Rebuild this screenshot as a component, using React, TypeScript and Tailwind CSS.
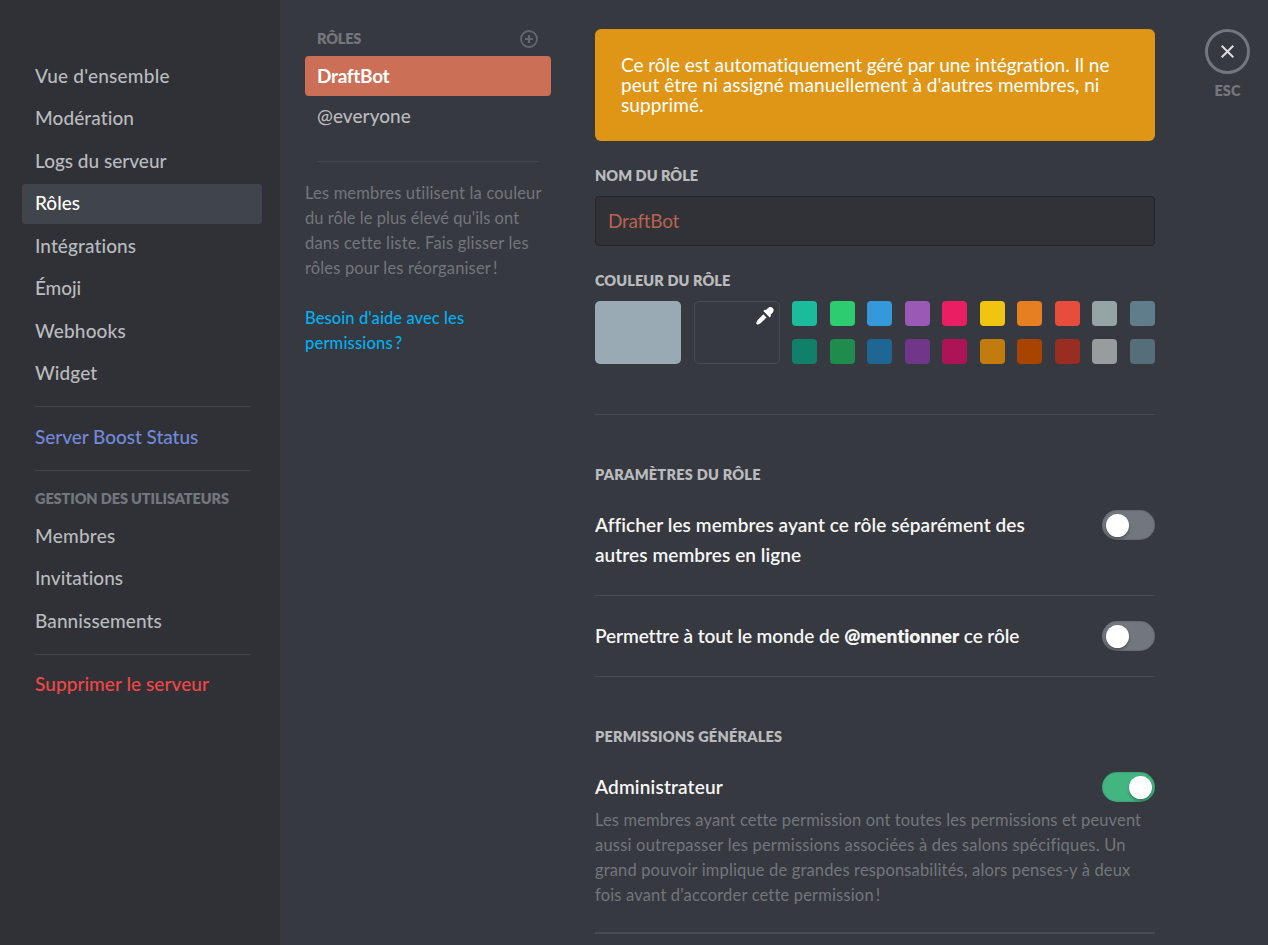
type NavItem = { label: string; style: string };

const mainNav: NavItem[] = [
  { label: "Vue d'ensemble", style: "tracking-[0.22px] text-[#b9bbbe]" },
  { label: "Modération", style: "tracking-[0.1px] text-[#b9bbbe]" },
  { label: "Logs du serveur", style: "tracking-[0px] text-[#b9bbbe]" },
  { label: "Rôles", style: "tracking-[0px] bg-[#40444b] text-white" },
  { label: "Intégrations", style: "tracking-[0.1px] text-[#b9bbbe]" },
  { label: "Émoji", style: "tracking-[-0.1px] text-[#b9bbbe]" },
  { label: "Webhooks", style: "tracking-[0.15px] text-[#b9bbbe]" },
  { label: "Widget", style: "tracking-[0.1px] text-[#b9bbbe]" },
];

const userNav: NavItem[] = [
  { label: "Membres", style: "tracking-[0.25px] text-[#b9bbbe]" },
  { label: "Invitations", style: "tracking-[0.05px] text-[#b9bbbe]" },
  { label: "Bannissements", style: "tracking-[0.1px] text-[#b9bbbe]" },
];

const swatches = [
  "bg-[#1abc9c]", "bg-[#2ecc71]", "bg-[#3498db]", "bg-[#9b59b6]", "bg-[#e91e63]",
  "bg-[#f1c40f]", "bg-[#e67e22]", "bg-[#e74c3c]", "bg-[#95a5a6]", "bg-[#607d8b]",
  "bg-[#11806a]", "bg-[#1f8b4c]", "bg-[#206694]", "bg-[#71368a]", "bg-[#ad1457]",
  "bg-[#c27c0e]", "bg-[#a84300]", "bg-[#992d22]", "bg-[#979c9f]", "bg-[#546e7a]",
];

function NavLink({ label, style }: NavItem) {
  return (
    <a className={`flex h-10 shrink-0 items-center rounded-[4px] px-[13px] text-[19px] font-medium ${style}`}>
      {label}
    </a>
  );
}

function SideRule() {
  return <hr className="mx-[13px] h-px w-[215px] shrink-0 border-0 bg-[#42454b]" />;
}

function Label({ className, children }: { className: string; children: string }) {
  return <h2 className={`text-[14.5px] leading-5 font-extrabold text-[#b9bbbe] ${className}`}>{children}</h2>;
}

function Toggle({ on = false }: { on?: boolean }) {
  return (
    <div
      className={`flex h-[30px] w-[53px] shrink-0 items-center rounded-full shadow-[inset_0_0_2px_rgba(0,0,0,0.3)] ${
        on ? "justify-end bg-[#43b581] pr-[3.5px]" : "justify-start bg-[#72767d] pl-[3.5px]"
      }`}
    >
      <div className="size-[23px] rounded-full bg-white shadow-[0_2px_3px_rgba(0,0,0,0.3)]" />
    </div>
  );
}

function Sidebar() {
  return (
    <nav className="flex w-[280px] shrink-0 flex-col bg-[#2f3136] pt-[56.1px] pr-[18px] pl-[22px]">
      <div className="flex flex-col gap-[2.5px]">
        {mainNav.map((item) => (
          <NavLink key={item.label} {...item} />
        ))}
      </div>
      <div className="mt-3 flex flex-col">
        <SideRule />
        <div className="mt-[10.5px] mb-[12.5px]">
          <NavLink label="Server Boost Status" style="tracking-[-0.04px] text-[#7289da]" />
        </div>
        <SideRule />
      </div>
      <h2 className="mt-[18px] px-[13px] text-[14.5px] leading-5 font-extrabold tracking-[-0.1px] whitespace-nowrap text-[#72767d]">
        GESTION DES UTILISATEURS
      </h2>
      <div className="mt-[7.5px] mb-[12.5px] flex flex-col gap-[2.5px]">
        {userNav.map((item) => (
          <NavLink key={item.label} {...item} />
        ))}
      </div>
      <SideRule />
      <div className="mt-[9.5px]">
        <NavLink label="Supprimer le serveur" style="tracking-[0.06px] text-[#f04747]" />
      </div>
    </nav>
  );
}

function RoleList() {
  return (
    <section className="ml-[25px] flex w-[246px] shrink-0 flex-col pt-[29px]">
      <div className="flex h-5 items-center justify-between px-3">
        <h2 className="text-[14.5px] leading-5 font-extrabold tracking-[-0.2px] text-[#72767d]">RÔLES</h2>
        <svg className="mr-px size-[18px]" viewBox="0 0 18 18" fill="none" stroke="#62666d">
          <circle cx="9" cy="9" r="8" strokeWidth="1.8" />
          <path d="M9 5v8M5 9h8" strokeWidth="2.2" />
        </svg>
      </div>
      <div className="mt-[7px] flex h-10 items-center rounded-[4px] bg-[#cc6f57] px-3 text-[19px] font-bold tracking-[-0.3px] text-white">
        DraftBot
      </div>
      <div className="flex h-10 items-center px-3 text-[19px] font-medium tracking-[0.05px] text-[#b9bbbe]">@everyone</div>
      <hr className="mx-3 mt-[25px] h-px border-0 bg-[#42454b]" />
      <p className="mt-[19px] text-[16.5px] leading-[25px] whitespace-nowrap text-[#72767d]">
        <span className="tracking-[0.17px]">Les membres utilisent la couleur</span>
        <br />
        <span className="tracking-[0.04px]">du rôle le plus élevé qu'ils ont</span>
        <br />
        <span className="tracking-[0.18px]">dans cette liste. Fais glisser les</span>
        <br />
        <span className="tracking-[0.15px]">rôles pour les réorganiser</span>
        <span className="ml-[2px]">!</span>
      </p>
      <a className="mt-[25px] text-[16.5px] leading-[25px] font-medium tracking-[0.09px] text-[#00b0f4]">
        Besoin d'aide avec les
        <br />
        <span className="tracking-[0.18px]">permissions</span>
        <span className="ml-[2px]">?</span>
      </a>
    </section>
  );
}

function ColorPicker() {
  return (
    <div className="mt-[10px] flex h-[63px] justify-between">
      <div className="w-[86px] rounded-[5px] bg-[#99aab5]" />
      <div className="ml-px flex w-[86px] justify-end rounded-[5px] border border-[#484b52] pt-[5px] pr-[5px]">
        <svg className="size-[18px]" viewBox="0 0 16 16" fill="#fff">
          <path d="M14.994 1.006C13.858-.257 11.904-.3 10.72.89L8.637 2.975l-.696-.697-1.387 1.388 5.557 5.557 1.387-1.388-.697-.697 1.964-1.964c1.13-1.13 1.3-2.985.23-4.168zm-13.25 10.25c-.225.224-.408.48-.55.764L.02 14.37l1.39 1.39 2.35-1.174c.283-.14.54-.33.765-.55l4.808-4.808-2.776-2.776-4.813 4.803z" />
        </svg>
      </div>
      <div className="grid grid-cols-[repeat(10,25px)] gap-x-[12.55px] gap-y-[13px]">
        {swatches.map((color) => (
          <div key={color} className={`size-[25px] rounded-[4px] ${color}`} />
        ))}
      </div>
    </div>
  );
}

function Rule({ className }: { className: string }) {
  return <hr className={`border-0 bg-[#484b52] ${className}`} />;
}

function RoleSettings() {
  return (
    <main className="ml-11 flex w-[560px] shrink-0 flex-col pt-[29px] whitespace-nowrap">
      <div className="h-28 rounded-[6px] bg-[#df9617] px-[26px] pt-[26px] text-[19px] leading-5 text-white">
        <p className="tracking-[-0.04px]">Ce rôle est automatiquement géré par une intégration. Il ne</p>
        <p className="tracking-[0.04px]">peut être ni assigné manuellement à d'autres membres, ni</p>
        <p className="tracking-[0.1px]">supprimé.</p>
      </div>

      <Label className="mt-[25px] tracking-[0.05px]">NOM DU RÔLE</Label>
      <div className="mt-[10px] flex h-[50px] items-center rounded-[4px] border border-[#222428] bg-[#303237] px-3 text-[19px] tracking-[-0.3px] text-[#b9624f]">
        DraftBot
      </div>

      <Label className="mt-[25px] tracking-[0.1px]">COULEUR DU RÔLE</Label>
      <ColorPicker />
      <Rule className="mt-[50px] h-px" />

      <Label className="mt-[50px] tracking-[0.25px]">PARAMÈTRES DU RÔLE</Label>
      <div className="mt-[25px] flex justify-between text-[19px] leading-[30px] font-semibold text-[#f6f6f7]">
        <div>
          <p className="tracking-[0.08px]">Afficher les membres ayant ce rôle séparément des</p>
          <p className="tracking-[0.07px]">autres membres en ligne</p>
        </div>
        <Toggle />
      </div>
      <Rule className="mt-[25px] h-px" />
      <div className="mt-[25px] flex justify-between text-[19px] leading-[30px] font-semibold text-[#f6f6f7]">
        <p className="tracking-[-0.08px]">
          Permettre à tout le monde de <strong className="font-extrabold">@mentionner</strong> ce rôle
        </p>
        <Toggle />
      </div>
      <Rule className="mt-[25px] h-px" />

      <Label className="mt-[50px] tracking-[0.22px]">PERMISSIONS GÉNÉRALES</Label>
      <div className="mt-[25px] flex justify-between text-[19px] leading-[30px] font-semibold text-[#f6f6f7]">
        <p className="tracking-[0.17px]">Administrateur</p>
        <Toggle on />
      </div>
      <div className="mt-[5.5px] text-[16.5px] leading-[25px] text-[#72767d]">
        <p className="tracking-[0.13px]">Les membres ayant cette permission ont toutes les permissions et peuvent</p>
        <p className="tracking-[0.2px]">aussi outrepasser les permissions associées à des salons spécifiques. Un</p>
        <p className="tracking-[0.15px]">grand pouvoir implique de grandes responsabilités, alors penses-y à deux</p>
        <p className="tracking-[0.17px]">
          fois avant d'accorder cette permission<span className="ml-[2px]">!</span>
        </p>
      </div>
      <Rule className="mt-[24.5px] h-[2px]" />
    </main>
  );
}

function CloseButton() {
  return (
    <aside className="ml-[50px] flex w-[45px] flex-col items-center pt-[29px]">
      <button className="flex size-[45px] items-center justify-center rounded-full border-[3px] border-[#72767d]">
        <svg className="mb-px size-[13px]" viewBox="0 0 13 13" stroke="#dcddde" strokeWidth="2" fill="none">
          <path d="M.7.7l11.6 11.6M12.3.7L.7 12.3" />
        </svg>
      </button>
      <span className="mt-[7px] text-[14.5px] leading-5 font-extrabold tracking-[0px] text-[#72767d]">ESC</span>
    </aside>
  );
}

export default function App() {
  return (
    <div className="flex h-[945px] w-[1268px] overflow-hidden bg-[#36393f] font-['Lato','Open_Sans',sans-serif]">
      <Sidebar />
      <RoleList />
      <RoleSettings />
      <CloseButton />
    </div>
  );
}
